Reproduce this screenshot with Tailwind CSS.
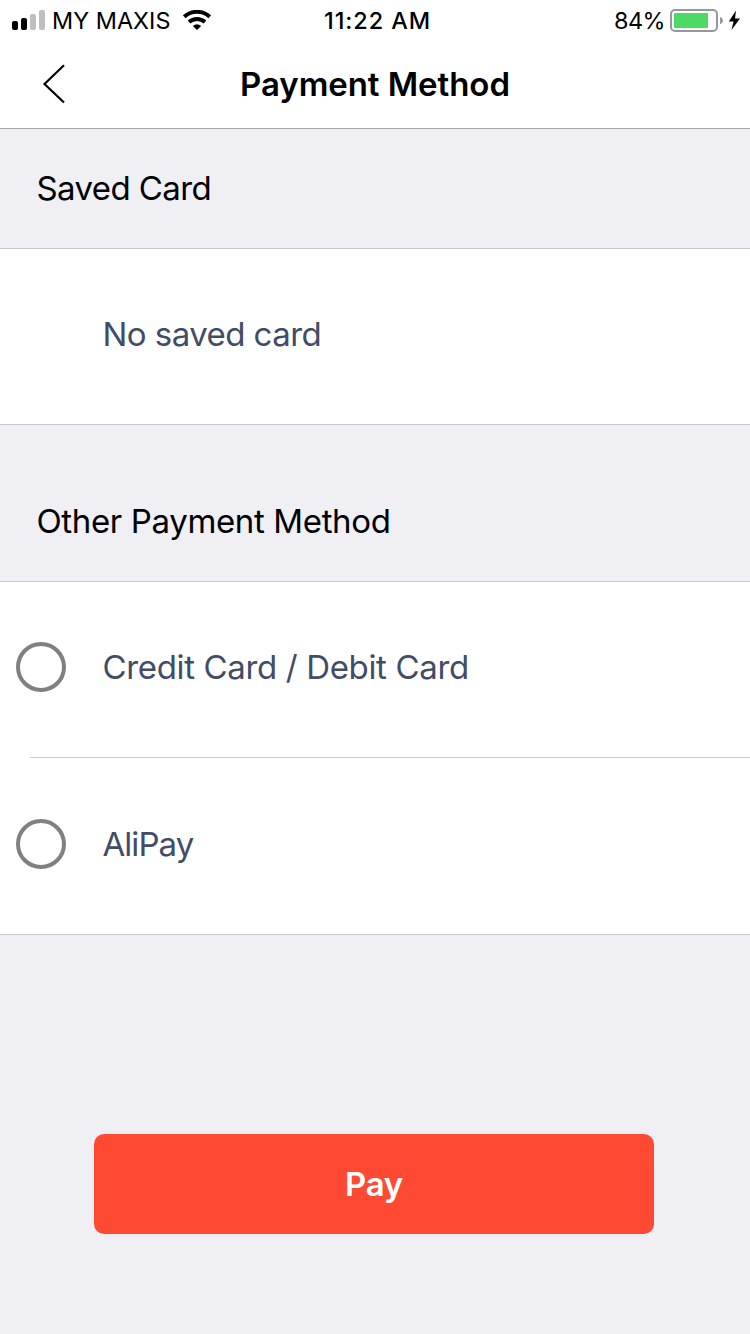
<!DOCTYPE html>
<html lang="en">
<head>
<meta charset="utf-8">
<title>Payment Method</title>
<script src="https://cdn.jsdelivr.net/npm/@tailwindcss/browser@4"></script>
</head>
<body class="w-[750px] h-[1334px] overflow-hidden bg-[#efeff4] font-['Inter','Liberation_Sans',sans-serif] text-[33px] leading-[40px] text-black whitespace-nowrap">
<header class="h-[129px] bg-white border-b border-[#a7a7ab]">
  <div class="grid grid-cols-[324px_1fr_auto] h-10 items-center pr-[9px] text-[23.4px] leading-[38px]">
    <div class="flex items-center h-10 pl-3">
      <svg class="w-[34px] h-5" viewBox="0 0 34 20">
        <rect x="0" y="11" width="6" height="9" rx="2"/>
        <rect x="9" y="8" width="6" height="12" rx="2"/>
        <rect x="18" y="4" width="6" height="16" rx="2" fill="#bfbfbf"/>
        <rect x="27" y="0" width="6" height="20" rx="2" fill="#bfbfbf"/>
      </svg>
      <span class="pt-0.5 pl-[6px] w-[136px] tracking-[0.05px]">MY MAXIS</span>
      <svg class="w-[30px] h-5" viewBox="0 0 30 20" fill="none" stroke="#000">
        <path d="M2.2 6.7C9.5 0.2 20.5 0.2 27.8 6.7" stroke-width="3.9"/>
        <path d="M7 12C11.6 7.9 18.4 7.9 23 12" stroke-width="3.9"/>
        <path d="M10.8 16Q15 12.4 19.2 16L15 20Z" fill="#000" stroke="none"/>
      </svg>
    </div>
    <span class="pt-0.5 font-medium tracking-[0.95px]">11:22 AM</span>
    <div class="flex items-center h-10">
      <span class="pt-0.5 w-[56px] tracking-[-0.5px]">84%</span>
      <svg class="w-[71px] h-6" viewBox="0 0 71 24">
        <rect x="1" y="2" width="46" height="21" rx="4" fill="none" stroke="#98989a" stroke-width="2"/>
        <rect x="4" y="5" width="34" height="15" rx="1" fill="#4cd964"/>
        <path d="M50 8.8Q53 10 53 12.5T50 16.2Z" fill="#98989a"/>
        <path d="M66 2.5L58.8 13.4H63.6L61.5 22L70 10.6H65Z"/>
      </svg>
    </div>
  </div>
  <div class="grid grid-cols-[240px_1fr] h-[88px] items-center">
    <svg class="ml-[42px] w-6 h-10" viewBox="0 0 24 40" fill="none" stroke="#000" stroke-width="2.2"><path d="M22 1.3L2.5 20L22 38.5"/></svg>
    <h1 class="font-semibold tracking-[-0.06px]">Payment Method</h1>
  </div>
</header>
<main>
  <h2 class="h-[120px] pt-[39px] pl-[36.5px] border-b border-[#c8c7cc] tracking-[-0.6px]">Saved Card</h2>
  <div class="h-[176px] pt-[65px] pl-[102.5px] bg-white border-b border-[#c8c7cc] text-[#424c66] tracking-[-0.55px]">No saved card</div>
  <h2 class="h-[157px] pt-[76px] pl-[36.5px] border-b border-[#c8c7cc] tracking-[-0.36px]">Other Payment Method</h2>
  <div class="bg-white border-b border-[#c8c7cc] text-[#424c66]">
    <div class="flex h-[175px] pt-[60px] pl-4 gap-[36.5px]">
      <div class="size-[50px] rounded-full border-4 border-[#808080]"></div>
      <span class="pt-[5px] tracking-[-0.35px]">Credit Card / Debit Card</span>
    </div>
    <div class="h-px ml-[30px] bg-[#c8c7cc]"></div>
    <div class="flex h-[176px] pt-[61px] pl-4 gap-[36.5px]">
      <div class="size-[50px] rounded-full border-4 border-[#808080]"></div>
      <span class="pt-[5px] tracking-[-0.95px]">AliPay</span>
    </div>
  </div>
  <button class="block mt-[199px] ml-[94px] w-[560px] h-[100px] rounded-[10px] bg-[#ff4a33] text-white font-semibold tracking-[-0.3px]">Pay</button>
</main>
</body>
</html>
